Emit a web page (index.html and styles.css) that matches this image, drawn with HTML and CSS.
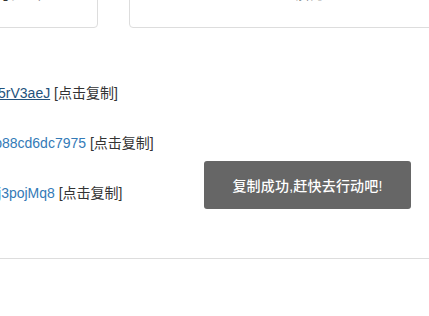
FILE: index.html
```html
<!DOCTYPE html>
<html lang="zh-CN">
<head>
<meta charset="utf-8">
<title>复制淘口令</title>
<link rel="stylesheet" href="styles.css">
</head>
<body>
<div class="page">
  <div class="tabs">
    <div class="tab tab-left"><span class="tab-label">淘口令</span></div>
    <div class="tab tab-right"><span class="tab-label">领券</span></div>
  </div>
  <ul class="codes">
    <li class="code-row"><a class="code code-active" href="#">https://s.click/5rV3aeJ</a> <span class="copy">[点击复制]</span></li>
    <li class="code-row"><a class="code" href="#">c4ca4238af0b88cd6dc7975</a> <span class="copy">[点击复制]</span></li>
    <li class="code-row"><a class="code" href="#">https://s.click/j3pojMq8</a> <span class="copy">[点击复制]</span></li>
  </ul>
  <hr class="divider">
</div>
<div class="toast">复制成功,赶快去行动吧!</div>
</body>
</html>
```
FILE: styles.css
```css
* { box-sizing: border-box; }
html, body {
  margin: 0;
  padding: 0;
  background: #fff;
  overflow: hidden;
}
body {
  width: 429px;
  height: 316px;
  font-family: "Liberation Sans", Arial, "Noto Sans CJK SC", sans-serif;
  font-size: 14px;
  color: #333;
}
.page {
  width: 429px;
}
.tabs {
  display: flex;
  gap: 31px;
  margin-top: -33px;
  margin-left: -60px;
}
.tab {
  flex-shrink: 0;
  height: 61px;
  border: 1px solid #ddd;
  border-radius: 4px;
  display: flex;
  align-items: center;
  justify-content: center;
  font-size: 18px;
  color: #333;
}
.tab-left { width: 158px; }
.tab-right { width: 360px; }
.tab-label { margin-top: -13px; }
.codes {
  list-style: none;
  margin: 55px 0 0 -86px;
  padding: 0;
  white-space: nowrap;
}
.code-row {
  height: 50px;
  line-height: 20px;
}
.code {
  color: #337ab7;
  text-decoration: none;
}
.code-active {
  color: #23527c;
  text-decoration: underline;
}
.copy { color: #333; }
.divider {
  margin: 25px 0 0;
  border: 0;
  border-top: 1px solid #ddd;
}
.toast {
  position: absolute;
  left: 204px;
  top: 161px;
  width: 207px;
  height: 48px;
  background: #666;
  border-radius: 3px;
  color: #fff;
  font-size: 14px;
  font-weight: 500;
  letter-spacing: 0.2px;
  display: flex;
  align-items: center;
  justify-content: center;
}
```
